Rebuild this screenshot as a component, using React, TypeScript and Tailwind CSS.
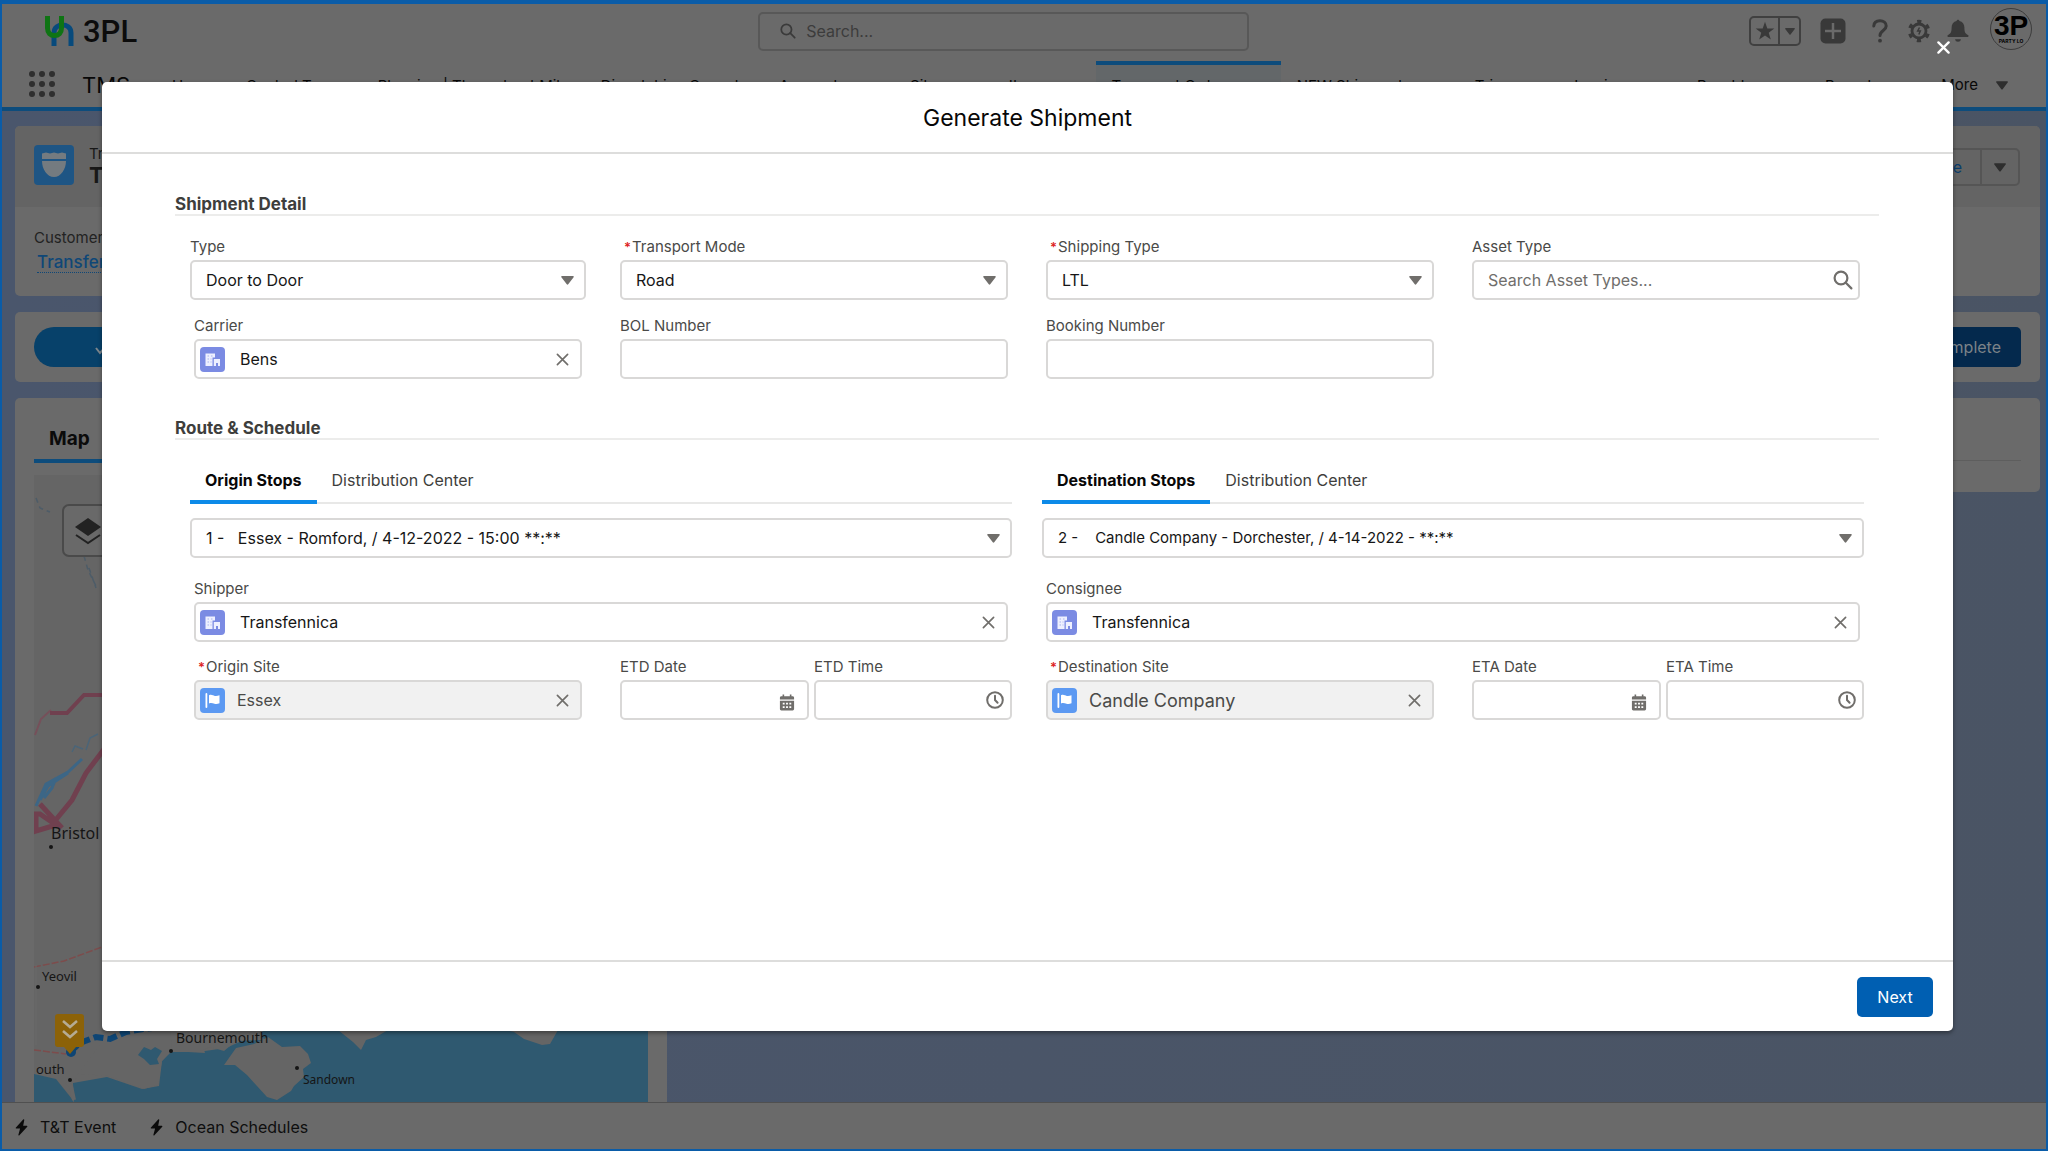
import React from "react";
import clsx from "clsx";

const navItems = [
  { label: "Home" },
  { label: "Control Tower" },
  { label: "Planning | Throughput Mile" },
  { label: "Dispatching Console" },
  { label: "Accounts", menu: true },
  { label: "Sites", menu: true },
  { label: "Items", menu: true },
  { label: "Transport Orders", menu: true, active: true },
  { label: "NEW Shipments", menu: true },
  { label: "Trips", menu: true },
  { label: "Invoices", menu: true },
  { label: "Payables", menu: true },
  { label: "Reports", menu: true },
];

function Caret({ className }: { className?: string }) {
  return (
    <svg viewBox="0 0 14 10" className={className} fill="currentColor" aria-hidden="true">
      <path d="M1 0h12c.8 0 1.200.7.8 1.300L7.800 9.300c-.4.6-1.200.6-1.600 0L.2 1.300C-.2.7.2 0 1 0z" />
    </svg>
  );
}

function Cross({ className }: { className?: string }) {
  return (
    <svg viewBox="0 0 14 14" className={clsx("h-[13px] w-[13px]", className)} fill="none" stroke="currentColor" strokeLinecap="round" aria-hidden="true">
      <path d="M1.500 1.500l11 11M12.500 1.500l-11 11" />
    </svg>
  );
}

function Magnifier({ className }: { className?: string }) {
  return (
    <svg viewBox="0 0 20 20" className={className} fill="none" stroke="currentColor" strokeWidth="2.200" strokeLinecap="round" aria-hidden="true">
      <circle cx="8" cy="8" r="6.400" />
      <path d="M12.800 12.800l5.600 5.600" />
    </svg>
  );
}

function AccountIcon() {
  return (
    <svg viewBox="0 0 25 25" className="h-[25px] w-[25px] shrink-0" aria-hidden="true">
      <rect width="25" height="25" rx="4" fill="#7b8be3" />
      <path d="M5.500 6.500h9.500v4h-2.500v8.500h-7z" fill="#eef0ff" />
      <path d="M13.800 12h6.200v7h-2v-3h-2v3h-2.200z" fill="#eef0ff" />
      <path d="M7.500 9h1.500M11 9h1.500M7.500 12h1.500M7.500 15h1.500M10.500 12h1M10.500 15h1" stroke="#a9b3ee" strokeWidth="1" />
    </svg>
  );
}

function SiteIcon() {
  return (
    <svg viewBox="0 0 25 25" className="h-[25px] w-[25px] shrink-0" aria-hidden="true">
      <rect width="25" height="25" rx="4" fill="#5c99f2" />
      <rect x="5.500" y="5" width="1.800" height="15" rx=".9" fill="#fff" />
      <path d="M9 7.200c2.500-1.200 4 .2 5.800.7 1.600.4 3-.1 4.700-.6v8c-1.700.7-3.300 1-5 .5-1.800-.5-3.200-1.400-5.500-.4z" fill="#fff" />
    </svg>
  );
}

function CalendarIcon() {
  return (
    <svg viewBox="0 0 16 18" className="mt-1 h-[17px] w-4" aria-hidden="true">
      <path d="M2 2.500h12c.8 0 1.500.6 1.500 1.500v1.700H.5V4c0-.9.700-1.500 1.500-1.500zM3.300.5h1.700v4H3.300zM11 .5h1.700v4H11z" fill="#706e6b" />
      <path d="M.5 7.200h15V16c0 .9-.7 1.500-1.500 1.500H2C1.200 17.500.5 16.900.5 16z" fill="#706e6b" />
      <path d="M3.500 10.200h2M7 10.200h2M10.500 10.200h2M3.500 13.800h2M7 13.800h2M10.500 13.800h2" stroke="#fff" strokeWidth="1.800" />
    </svg>
  );
}

function ClockIcon() {
  return (
    <svg viewBox="0 0 18 18" className="h-[18px] w-[18px]" fill="none" stroke="#706e6b" strokeWidth="2" strokeLinecap="round" aria-hidden="true">
      <circle cx="9" cy="9" r="7.800" />
      <path d="M9 4.800V9l2.600 2.800" />
    </svg>
  );
}

function Bolt() {
  return (
    <svg viewBox="0 0 14 18" className="h-[17px] w-[13px]" fill="#0b0b0b" aria-hidden="true">
      <path d="M8.800.3L.8 9.200c-.3.400 0 .9.400.9h4.300L3.600 17c-.1.600.5.9.9.500l8.700-9.400c.3-.4 0-.9-.5-.9H8.800L10 1c.2-.7-.7-1.200-1.200-.7z" />
    </svg>
  );
}

const boxClass = "h-10 w-full rounded-[5px] border-2 border-[#d9d8d7] text-[#161616] outline-none";

type FieldProps = {
  id: string;
  label: string;
  required?: boolean;
  className?: string;
  children: React.ReactNode;
};

function Field({ id, label, required, className, children }: FieldProps) {
  return (
    <div className={clsx("min-w-0", className)}>
      <label htmlFor={id} className="mb-1 flex h-[18px] items-center text-[15px] leading-[18px] text-[#4a4a48]">
        {required && <span className="ml-1 w-2 text-[13px] font-semibold text-[#d22]">*</span>}
        {label}
      </label>
      {children}
    </div>
  );
}

type PicklistProps = { id: string; value: string; label?: string; small?: boolean };

function Picklist({ id, value, label, small }: PicklistProps) {
  return (
    <div className="relative">
      <select
        id={id}
        aria-label={label}
        className={clsx(boxClass, "appearance-none bg-white px-[14px]", small ? "text-[15px]" : "text-base")}
      >
        <option>{value}</option>
      </select>
      <Caret className="pointer-events-none absolute top-4 right-3 h-[9px] w-[13px] text-[#706e6b]" />
    </div>
  );
}

function Lookup({ id, value, site }: { id: string; value: string; site?: boolean }) {
  return (
    <div className={clsx(boxClass, "flex items-center pr-[11px] pl-1", site ? "bg-[#f1f1f1]" : "bg-white")}>
      {site ? <SiteIcon /> : <AccountIcon />}
      <input
        id={id}
        defaultValue={value}
        readOnly={site}
        className={clsx(
          "h-full min-w-0 flex-1 bg-transparent outline-none",
          site ? "pl-3 text-[#4a4a48]" : "pl-[15px]",
          value.length > 12 ? "text-lg" : "text-base"
        )}
      />
      <button type="button" aria-label="Clear selection" className="text-[#706e6b]">
        <Cross className="stroke-[1.8]" />
      </button>
    </div>
  );
}

function SectionTitle({ children }: { children: React.ReactNode }) {
  return (
    <h3 className="h-6 border-b-2 border-[#ececeb] text-[17px] leading-6 font-bold text-[#3e3e3c]">
      {children}
    </h3>
  );
}

type StopPanelProps = {
  prefix: string;
  tab: string;
  stop: string;
  smallStop?: boolean;
  partyLabel: string;
  siteLabel: string;
  site: string;
  eta: string;
};

function StopPanel({ prefix, tab, stop, smallStop, partyLabel, siteLabel, site, eta }: StopPanelProps) {
  return (
    <div className="px-[15px] pt-5">
      <div role="tablist" className="flex h-11 border-b-2 border-[#e8e8e7] text-base">
        <button type="button" role="tab" aria-selected="true" className="h-11 border-b-4 border-[#0d8ae8] px-[15px] font-bold text-[#080707]">
          {tab}
        </button>
        <button type="button" role="tab" aria-selected="false" className="h-10 px-[15px] text-[#3e3e3c]">
          Distribution Center
        </button>
      </div>
      <div className="mt-[14px]">
        <Picklist id={prefix + "-stop"} label={tab} value={stop} small={smallStop} />
      </div>
      <div className="px-1 pt-[22px]">
        <Field id={prefix + "-party"} label={partyLabel}>
          <Lookup id={prefix + "-party"} value="Transfennica" />
        </Field>
      </div>
      <div className="flex pt-4 pl-1">
        <div className="w-1/2 pr-[21px]">
          <Field id={prefix + "-site"} label={siteLabel} required>
            <Lookup id={prefix + "-site"} value={site} site />
          </Field>
        </div>
        <div className="flex w-1/2 gap-[5px] pl-[17px]">
          <Field id={prefix + "-date"} label={eta + " Date"} className="flex-[21]">
            <div className={clsx(boxClass, "flex items-center pr-3")}>
              <input id={prefix + "-date"} className="h-full min-w-0 flex-1 pl-3 outline-none" />
              <CalendarIcon />
            </div>
          </Field>
          <Field id={prefix + "-time"} label={eta + " Time"} className="flex-[22]">
            <div className={clsx(boxClass, "flex items-center pr-[6px]")}>
              <input id={prefix + "-time"} className="h-full min-w-0 flex-1 pl-3 outline-none" />
              <ClockIcon />
            </div>
          </Field>
        </div>
      </div>
    </div>
  );
}

function GlobalHeader() {
  return (
    <header className="border-b-4 border-[#0d4c7c] bg-[#6a6a6a]">
      <div className="flex h-[54px] items-center">
        <div className="flex w-[37%] items-center pl-[42px]">
          <svg viewBox="0 0 30 30" className="h-[30px] w-[30px]" fill="none" strokeWidth="5" aria-hidden="true">
            <path d="M10 30V17c0-6 5-8 8.500-8s8.500 2 8.500 8v13" stroke="#074a7c" />
            <path d="M3.500 0v12c0 5 3 7.500 7 7.500s7-2.500 7-7.500V0" stroke="#0f7414" />
          </svg>
          <span className="ml-[9px] pt-[2px] font-['Roboto',sans-serif] text-[31px] leading-8 font-medium text-[#0c0c0c]">3PL</span>
        </div>
        <label className="flex h-[39px] w-[24%] items-center rounded-[5px] border-2 border-[#585858] pl-5 text-[#3a3a3a]">
          <Magnifier className="h-4 w-4" />
          <input
            type="search"
            aria-label="Search"
            placeholder="Search..."
            className="ml-[10px] min-w-0 flex-1 bg-transparent text-base outline-none placeholder:text-[#3c3c3c]"
          />
        </label>
        <div className="ml-auto flex items-center pr-[14px] text-[#393939]">
          <div className="mr-[19px] flex h-[30px] w-[52px] rounded-[5px] border-2 border-[#404040]">
            <button type="button" aria-label="Favorites" className="flex w-[29px] items-center justify-center border-r-2 border-[#404040]">
              <svg viewBox="0 0 20 20" className="h-5 w-5" fill="currentColor">
                <path d="M10 .8l2.300 6.700h7l-5.600 4.200 2.100 6.900L10 14.500l-5.800 4.100 2.100-6.900L.7 7.500h7z" />
              </svg>
            </button>
            <button type="button" aria-label="Favorites list" className="flex flex-1 items-center justify-center">
              <Caret className="h-[7px] w-[10px]" />
            </button>
          </div>
          <button type="button" aria-label="Global actions" className="mr-[14px]">
            <svg viewBox="0 0 26 26" className="h-[26px] w-[26px]">
              <rect x=".5" y=".5" width="25" height="25" rx="5" fill="currentColor" />
              <path d="M13 5v16M5 13h16" stroke="#6a6a6a" strokeWidth="2.500" />
            </svg>
          </button>
          <button type="button" aria-label="Help" className="flex w-[39px] justify-center">
            <svg viewBox="0 0 16 24" className="h-6 w-4" fill="none" stroke="currentColor" strokeWidth="3" strokeLinecap="round">
              <path d="M1.800 7C2 3.500 4.500 1.800 8 1.800s6.200 2 6.200 5.200c0 4.500-6.200 4.500-6.200 9.500" />
              <circle cx="8" cy="21.700" r="1.900" fill="currentColor" stroke="none" />
            </svg>
          </button>
          <button type="button" aria-label="Setup" className="flex w-[39px] justify-center">
            <svg viewBox="0 0 24 24" className="h-6 w-6" fill="none" stroke="currentColor">
              <circle cx="12" cy="12" r="7" strokeWidth="2.800" />
              <circle cx="12" cy="12" r="9.600" strokeWidth="3.200" strokeDasharray="4.200 5.850" strokeDashoffset="-2.900" />
              <path d="M12.500 8.500l-1.800 3.500h2.600l-1.500 3.500" strokeWidth="1.500" />
            </svg>
          </button>
          <button type="button" aria-label="Notifications" className="flex w-[39px] justify-center">
            <svg viewBox="0 0 24 24" className="h-6 w-6" fill="currentColor">
              <path d="M12 .8c.9 0 1.400.6 1.400 1.300 3.200.7 5 3.200 5 6.400 0 4.700.8 6 3.600 7.500.9.500.7 2-.4 2H2.400c-1.100 0-1.300-1.500-.4-2 2.800-1.500 3.600-2.800 3.600-7.500 0-3.200 1.800-5.700 5-6.400 0-.7.500-1.300 1.400-1.300z" />
              <path d="M9 20.300h6c-.3 1.700-1.500 2.500-3 2.500s-2.700-.8-3-2.500z" />
            </svg>
          </button>
          <button type="button" aria-label="View profile" className="ml-[13px] -mt-1 flex h-[42px] w-[42px] flex-col items-center justify-center rounded-full border border-[#3c3c3c] text-black">
            <span className="font-['Liberation_Sans',sans-serif] text-[28px] leading-[25px] font-bold whitespace-nowrap">3P</span>
            <span className="text-[5px] leading-[7px] font-bold whitespace-nowrap">PARTY LO</span>
          </button>
        </div>
      </div>
      <nav className="mt-[3px] flex h-[46px] items-center text-[15px] whitespace-nowrap text-[#080808]">
        <button type="button" aria-label="App launcher" className="ml-[27px]">
          <svg viewBox="0 0 26 26" className="h-[26px] w-[26px]" fill="#2f2f2f">
            {[3, 13, 23].map((y) => [3, 13, 23].map((x) => <circle key={x + "-" + y} cx={x} cy={y} r="3" />))}
          </svg>
        </button>
        <span className="ml-[27px] w-[74px] pt-[2px] text-[22px]">TMS</span>
        <div className="flex h-full min-w-0 flex-1">
          {navItems.map((item) => (
            <a
              key={item.label}
              href="#"
              className={clsx(
                "flex items-center border-t-4 px-4",
                item.active ? "border-[#0d4c7c] bg-[#636769]" : "border-transparent"
              )}
            >
              {item.label}
              {item.menu && <Caret className="ml-5 h-2 w-3 text-[#333]" />}
            </a>
          ))}
        </div>
        <button type="button" className="mr-[38px] flex items-center gap-[18px] pt-[2px]">
          More
          <Caret className="h-[9px] w-3 text-[#2e2e2e]" />
        </button>
      </nav>
    </header>
  );
}

function RouteMap() {
  return (
    <svg viewBox="34 475 614 628" className="h-[628px] w-[614px]" fontFamily="'Noto Sans', sans-serif" fill="#151515">
      <rect x="34" y="475" width="614" height="628" fill="#656565" />
      <path d="M36 498l4 10 10 4M84 556l4 14 8 16M89 568l7 20" fill="none" stroke="#4d5c68" strokeWidth="1.500" strokeDasharray="5 4" />
      <path d="M35 735l6-16 10-9" fill="none" stroke="#76505a" strokeWidth="2" />
      <path d="M50 713h17l17-18h24" fill="none" stroke="#70404f" strokeWidth="4" />
      <path d="M36 806l10-22 22-12 14-13M40 800l8-14 20-13M44 798l8-10 4-10" fill="none" stroke="#3c6686" strokeWidth="3" />
      <path d="M72 752l3-6 8 3M86 750l4-12 8-4" fill="none" stroke="#4b6578" strokeWidth="1.500" />
      <path d="M34 814h6l16 11-20 6v-18M40 804l22 24M54 822l18-22 14-27 22-29" fill="none" stroke="#70404f" strokeWidth="5" />
      <path d="M34 967l30-6 38-14M34 1050l32 4" fill="none" stroke="#7d4c4c" strokeWidth="1.500" strokeDasharray="7 2" />
      <path d="M36 965v80" stroke="#6a6a6a" strokeWidth="1" />
      <path d="M34 1074l22 5 16 20 2 4H34z" fill="#2f5970" />
      <path d="M74 1103l-1-20 34-6 35 12 17-3 3-25 10-10 26 1 28-4 40-18h382v73z" fill="#2f5970" />
      <path d="M72 1082l10-8 26 2 36 13 14-4 4-24 9-10 34 2-6-20h-90z" fill="#656565" />
      <path d="M172 1052l26 0 12-5 14 4 12-10 28-1-4-12h-90z" fill="#656565" />
      <path d="M138 1055l6-8 7 3 4-3 7 4-5 8 2 5-9 1-6-6z" fill="#2f5970" />
      <path d="M224 1065l12-17 18-4 14-7 14 10 18-1 8 8 3 9-8 6 1 8-10 9-3 5-14 9-10-3-20-22-12-10z" fill="#656565" />
      <path d="M338 1030h50l-12 7-10 3-5 10-8-8zM506 1030h52l-8 14-8 1-18-6-10-7z" fill="#656565" />
      <path d="M74 1100l-3-14-4-4" fill="none" stroke="#656565" strokeWidth="4" />
      <path d="M70 1052l10-9 16-6 14 2 16-7 17-3 20-2" fill="none" stroke="#0e4574" strokeWidth="6" strokeDasharray="10 4" />
      <circle cx="71" cy="1052" r="5" fill="#0e4574" />
      <path d="M58 1014h23q3 0 3 3v27q0 3-3 3h-5l-6 7-6-7h-6q-3 0-3-3v-27q0-3 3-3z" fill="#8c6208" />
      <path d="M63 1021l7 6 7-6M63 1031l7 6 7-6" fill="none" stroke="#b5ab93" strokeWidth="2.500" />
      <rect x="63" y="505" width="60" height="51" rx="6" fill="#696969" stroke="#4a4a4a" strokeWidth="2" />
      <path d="M75 527l13-9 13 9-13 9z" fill="#222" />
      <path d="M76 535l12 8 12-8" fill="none" stroke="#222" strokeWidth="2" />
      <text x="51" y="839" fontSize="16">Bristol</text>
      <circle cx="51" cy="847" r="2" />
      <text x="42" y="981" fontSize="13">Yeovil</text>
      <circle cx="38" cy="987" r="2" />
      <text x="176" y="1043" fontSize="14">Bournemouth</text>
      <circle cx="171" cy="1051" r="2" />
      <text x="36" y="1074" fontSize="13">outh</text>
      <circle cx="70" cy="1080" r="2" />
      <text x="303" y="1084" fontSize="12">Sandown</text>
      <circle cx="297" cy="1068" r="2" />
    </svg>
  );
}

function RecordPage() {
  return (
    <main className="flex min-h-0 flex-1 flex-col gap-4 overflow-hidden bg-[#4a5464] bg-gradient-to-r from-[#4a566c] to-[#4a5464] pt-[15px] pr-[6px] pl-[13px]">
      <section className="h-[170px] shrink-0 overflow-hidden rounded-[5px] bg-[#6a6a6a]">
        <div className="flex h-[81px] items-start bg-[#646464] pt-[19px] pr-5 pl-[19px]">
          <svg viewBox="0 0 40 40" className="h-10 w-10">
            <rect width="40" height="40" rx="4" fill="#1e5584" />
            <path d="M8 8.500l4-1 4 1 4-1 4 1 4-1 4 1v5.500H8zM8 16h24c0 8-5 16-12 16S8 24 8 16z" fill="#747b80" />
          </svg>
          <div className="ml-[15px] text-[#181818]">
            <p className="text-[15px] leading-[18px]">Transport Order</p>
            <h1 className="text-[22px] leading-6 font-bold">TO-0012</h1>
          </div>
          <div className="mt-[3px] ml-auto flex h-[38px] rounded-[5px] border-2 border-[#555] text-base text-[#0b3d6b]">
            <button type="button" className="px-[18px]">Clone</button>
            <button type="button" aria-label="More actions" className="border-l-2 border-[#555] px-3 text-[#2e2e2e]">
              <Caret className="h-[9px] w-3" />
            </button>
          </div>
        </div>
        <div className="pt-[21px] pl-[19px]">
          <p className="text-[15px] leading-5 text-[#222]">Customer</p>
          <a href="#" className="ml-[3px] border-b border-dotted border-[#0f4777] text-[17px] leading-7 font-medium text-[#0f4777]">
            Transfennica
          </a>
        </div>
      </section>
      <section className="flex h-[70px] shrink-0 items-center justify-between rounded-[5px] bg-[#6a6a6a] px-[19px]">
        <div className="h-10 w-[300px] rounded-full bg-[#07416a] pt-[14px] pl-[61px]">
          <svg viewBox="0 0 16 14" className="h-[14px] w-4" fill="none" stroke="#7d868c" strokeWidth="2">
            <path d="M1 7l4 5L15 1" />
          </svg>
        </div>
        <button type="button" className="h-10 rounded-[5px] bg-[#04294d] px-5 text-base text-[#7b8288]">
          Mark Complete
        </button>
      </section>
      <div className="flex min-h-0 flex-1 items-start gap-4">
        <section className="h-full w-[652px] shrink-0 rounded-t-[5px] bg-[#6a6a6a] px-[19px]">
          <div className="mb-3 h-[65px] border-b-4 border-[#0d4c7c] pt-[27px] pl-[15px] text-[19px] leading-7 font-bold text-[#0b0b0b]">
            Map
          </div>
          <RouteMap />
        </section>
        <section className="h-[94px] flex-1 rounded-[5px] bg-[#6a6a6a] px-[19px]">
          <div className="h-[63px] border-b border-[#5e5e5e]" />
        </section>
      </div>
    </main>
  );
}

function ShipmentDialog() {
  return (
    <div className="absolute inset-0 pt-[78px] pr-[93px] pb-[118px] pl-[100px]">
      <button type="button" aria-label="Close" className="absolute top-[37px] right-24 text-white">
        <Cross className="stroke-[2.5]" />
      </button>
      <div role="dialog" aria-label="Generate Shipment" className="flex h-full flex-col overflow-hidden rounded-[5px] bg-white shadow-[0_2px_4px_rgba(0,0,0,0.4)]">
        <header className="flex h-[72px] shrink-0 items-center justify-center border-b-2 border-[#dddddc] pt-[2px]">
          <h2 className="text-[23px] text-[#080707]">Generate Shipment</h2>
        </header>
        <form className="flex-1 pt-[38px] pr-[74px] pl-[73px]">
          <SectionTitle>Shipment Detail</SectionTitle>
          <div className="grid grid-cols-4 gap-y-[17px] pt-[22px]">
            <Field id="type" label="Type" className="px-[15px]">
              <Picklist id="type" value="Door to Door" />
            </Field>
            <Field id="mode" label="Transport Mode" required className="px-[19px]">
              <Picklist id="mode" value="Road" />
            </Field>
            <Field id="shipping" label="Shipping Type" required className="px-[19px]">
              <Picklist id="shipping" value="LTL" />
            </Field>
            <Field id="asset" label="Asset Type" className="px-[19px]">
              <div className={clsx(boxClass, "flex items-center pr-[5px]")}>
                <input
                  id="asset"
                  placeholder="Search Asset Types..."
                  className="h-full min-w-0 flex-1 pl-[14px] text-base outline-none placeholder:text-[#706e6b]"
                />
                <Magnifier className="h-5 w-5 text-[#706e6b]" />
              </div>
            </Field>
            <Field id="carrier" label="Carrier" className="px-[19px]">
              <Lookup id="carrier" value="Bens" />
            </Field>
            <Field id="bol" label="BOL Number" className="px-[19px]">
              <input id="bol" className={clsx(boxClass, "px-3")} />
            </Field>
            <Field id="booking" label="Booking Number" className="px-[19px]">
              <input id="booking" className={clsx(boxClass, "px-3")} />
            </Field>
          </div>
          <div className="pt-[37px]">
            <SectionTitle>Route &amp; Schedule</SectionTitle>
          </div>
          <div className="grid grid-cols-2">
            <StopPanel
              prefix="origin"
              tab="Origin Stops"
              stop={"1 -\u00a0\u00a0\u00a0Essex - Romford, / 4-12-2022 - 15:00 **:**"}
              partyLabel="Shipper"
              siteLabel="Origin Site"
              site="Essex"
              eta="ETD"
            />
            <StopPanel
              prefix="destination"
              tab="Destination Stops"
              stop={"2 -\u00a0\u00a0\u00a0\u00a0Candle Company - Dorchester, / 4-14-2022 - **:**"}
              smallStop
              partyLabel="Consignee"
              siteLabel="Destination Site"
              site="Candle Company"
              eta="ETA"
            />
          </div>
        </form>
        <footer className="flex h-[71px] shrink-0 items-center justify-end border-t-2 border-[#dddddc] pr-5">
          <button type="button" className="h-10 w-[76px] rounded-[5px] bg-[#005fb2] text-base text-white">
            Next
          </button>
        </footer>
      </div>
    </div>
  );
}

export default function App() {
  return (
    <div className="relative flex h-screen flex-col overflow-hidden border-2 border-t-4 border-[#0a5ca8] font-['Inter',sans-serif]">
      <GlobalHeader />
      <RecordPage />
      <div className="z-10 flex h-[47px] shrink-0 items-center border-t border-[#505050] bg-[#6a6a6a] pt-[2px] pl-[13px] text-base text-[#0e0e0e]">
        <button type="button" className="mr-[34px] flex items-center gap-3">
          <Bolt />
          T&amp;T Event
        </button>
        <button type="button" className="flex items-center gap-3">
          <Bolt />
          Ocean Schedules
        </button>
      </div>
      <div className="absolute inset-0 z-20">
        <ShipmentDialog />
      </div>
    </div>
  );
}
